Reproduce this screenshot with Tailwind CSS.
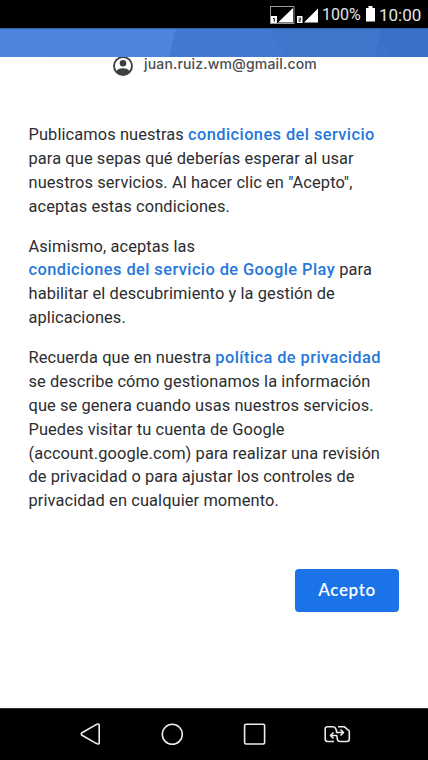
<!DOCTYPE html>
<html lang="es">
  <head>
    <meta charset="UTF-8" />
    <meta name="viewport" content="width=device-width, initial-scale=1.0" />
    <script src="https://cdn.jsdelivr.net/npm/@tailwindcss/browser@4"></script>
    <title>Condiciones del servicio</title>
  </head>
  <body class="bg-white">
    <div class="w-[428px] h-[760px] flex flex-col overflow-hidden font-[Roboto,sans-serif]">
      <!-- status bar -->
      <div class="h-7 shrink-0 bg-black text-[#e4e4e4] flex items-center justify-end pr-[7px] pt-[2px]">
        <svg class="w-[50px] h-[20px] mr-[3px]" viewBox="0 0 50 20" fill="none">
          <rect x="1.5" y="1.5" width="23.5" height="17" stroke="#999" />
          <path d="M9 17.5L24 3V17.5Z" fill="#fff" />
          <rect x="2" y="11" width="6" height="7" fill="#fff" />
          <path d="M4 13.5h1.3v3" stroke="#000" />
          <path d="M35 17.5L49 3.5V17.5Z" fill="#fff" />
          <rect x="28" y="11" width="5.500" height="7" fill="#fff" />
          <path d="M29.500 13h2v1.700h-1.500v1.500h2" stroke="#000" stroke-width=".8" />
        </svg>
        <span class="text-[16px] leading-5 w-[41px] whitespace-nowrap">100%</span>
        <svg class="w-[9px] h-4 ml-[3px] mr-[4px] -mt-[2px]" viewBox="0 0 9 16" fill="#fff">
          <path d="M2.500 0h4v2H9v13.500H0V2h2.500z" />
        </svg>
        <span class="text-[17px] leading-5 w-[42px] whitespace-nowrap">10:00</span>
      </div>

      <!-- header -->
      <svg class="w-full h-[29px] shrink-0 relative z-10" viewBox="0 0 428 29">
        <rect width="428" height="29" fill="#4d84dd" />
        <path d="M0 0H48L56 29H0Z" fill="#4e85de" />
        <path d="M176 0H428V29H169Z" fill="#4279d2" />
        <path d="M268 0H428V29H285Z" fill="#4077cc" />
        <path d="M381 0H428V29H376Z" fill="#3a70c7" />
        <path d="M381 13L394 29H376Z" fill="#3d73ca" />
        <rect width="428" height="1" fill="#315ba5" />
      </svg>

      <!-- account -->
      <div class="flex items-center h-5 -mt-[1px] pl-[113px] shrink-0 text-[#4a4d51]">
        <svg class="w-5 h-5 shrink-0 -mt-[1px]" viewBox="0 0 20 20" fill="none">
          <circle cx="10" cy="10" r="9" stroke="#3c4043" stroke-width="1.900" />
          <circle cx="10" cy="7.200" r="3.300" fill="#3c4043" />
          <path d="M3.300 15C5 12.800 7.300 12.200 10 12.200S15 12.800 16.700 15C15 18 12.700 19 10 19S5 18 3.300 15Z" fill="#3c4043" />
        </svg>
        <span class="ml-[11px] -mt-[4px] text-[14px] leading-5 font-medium tracking-[0.17px] font-[Inter,sans-serif]">juan.ruiz.wm@gmail.com</span>
      </div>

      <!-- text -->
      <div class="mt-[47px] ml-[28.5px] shrink-0 flex flex-col gap-4 text-[16.4px] leading-[23.87px] tracking-[0.1px] text-[#2b2d30] whitespace-nowrap">
        <p>
          Publicamos nuestras <a class="font-medium tracking-[0.42px] text-[#2577db]">condiciones del servicio</a><br />
          para que sepas qué deberías esperar al usar<br />
          nuestros servicios. Al hacer clic en "Acepto",<br />
          aceptas estas condiciones.
        </p>
        <p>
          Asimismo, aceptas las<br />
          <a class="font-medium tracking-[0.42px] text-[#2577db]">condiciones del servicio de Google Play</a> para<br />
          habilitar el descubrimiento y la gestión de<br />
          aplicaciones.
        </p>
        <p>
          Recuerda que en nuestra <a class="font-medium tracking-[0.42px] text-[#2577db]">política de privacidad</a><br />
          se describe cómo gestionamos la información<br />
          que se genera cuando usas nuestros servicios.<br />
          Puedes visitar tu cuenta de Google<br />
          (account.google.com) para realizar una revisión<br />
          de privacidad o para ajustar los controles de<br />
          privacidad en cualquier momento.
        </p>
      </div>

      <div class="flex justify-end mt-auto mb-[96px] pr-[29px]">
        <button class="w-[104px] h-[43px] rounded-[4px] bg-[#1a73e8] text-white text-[17px] font-semibold tracking-[0.6px] pb-[1px] font-[Lato,sans-serif]">Acepto</button>
      </div>

      <!-- navigation bar -->
      <div class="h-[52px] shrink-0 bg-black border-t border-[#333]">
        <svg class="w-full h-[51px]" viewBox="0 709 428 51" fill="none" stroke="#ececec" stroke-width="1.600" stroke-linejoin="round">
          <path d="M82 732.700L96.500 724.400Q99.200 723.200 99.200 725.500V742.500Q99.200 744.800 96.500 743.600L82 735.300Q80.500 734 82 732.700Z" />
          <circle cx="172.300" cy="734.300" r="10" />
          <rect x="244.600" y="724.300" width="20" height="19.700" rx="1.500" />
          <path d="M334 741.500H327.500Q325.200 741.500 325.200 739V729Q325.200 726.800 327.500 726.800H333Q334.500 726.800 335.300 728L336.500 730.500V732.500H343M340.500 729.500L343.500 732.500L340.500 735.500" />
          <path d="M338 726.800H344.500L349.300 731V739Q349.300 741.500 347 741.500H340Q338 741.500 337.500 740L336.800 735.500H331M333.500 732.500L330.500 735.500L333.500 738.500" />
        </svg>
      </div>
    </div>
  </body>
</html>
